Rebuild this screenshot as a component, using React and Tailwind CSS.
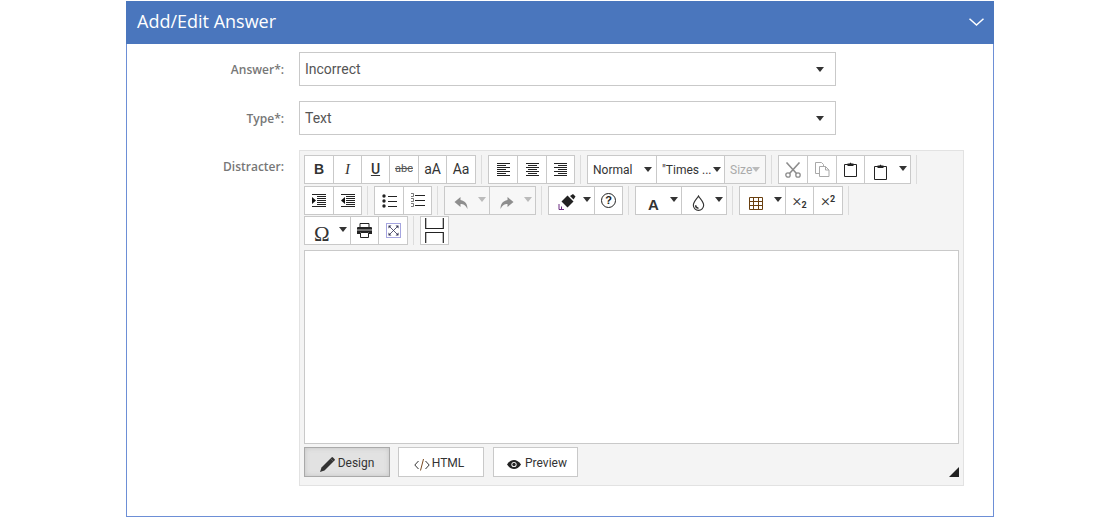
import React from "react";

const Caret = ({ c = "#333" }) => (
  <svg width="8" height="5" viewBox="0 0 8 5" className="shrink-0"><path d="M0 0h8L4 5z" fill={c} /></svg>
);

const Btn = ({ w, children, off }) => (
  <div className={`h-[29px] border border-[#c9c9c9] -ml-px first:ml-0 flex items-center justify-center shrink-0 ${w} ${off ? "bg-[#f7f7f7]" : "bg-white"}`}>
    {children}
  </div>
);

const Split = ({ w, children, off }) => (
  <Btn w={w} off={off}>
    <div className="flex items-center w-full pl-[9px] pr-[3px] justify-between">
      <div className="mt-[5px] flex">{children}</div>
      <div className="-mt-[3px] flex"><Caret c={off ? "#bbb" : "#333"} /></div>
    </div>
  </Btn>
);

const Sep = () => <div className="w-px h-[29px] bg-[#dcdcdc] ml-[5px] mr-[6px] shrink-0" />;
const Group = ({ children }) => <div className="flex shrink-0">{children}</div>;
const Row = ({ children, cls }) => <div className={`flex h-[29px] ${cls}`}>{children}</div>;

const Lines = ({ rows }) => (
  <svg width="15" height="15" viewBox="0 0 15 15">
    {rows.map(([a, b], i) => (
      <path key={i} d={`M${a} ${1.5 + i * 2}H${b}`} stroke="#222" strokeWidth="1" />
    ))}
  </svg>
);

const Indent = ({ out }) => (
  <svg width="16" height="15" viewBox="0 0 16 15">
    {[0, 2, 4, 6, 8, 10, 12].map((y) => (
      <path key={y} d={y === 0 || y === 12 ? `M1 ${y + 1.5}H15` : `M6 ${y + 1.5}H15`} stroke="#222" />
    ))}
    <path d={out ? "M5 4L1 7.500 5 11z" : "M1 4l4 3.500L1 11z"} fill="#111" />
  </svg>
);

const Bullets = () => (
  <svg width="15" height="14" viewBox="0 0 15 14">
    {[2, 7, 12].map((y) => (
      <g key={y}>
        <circle cx="2" cy={y} r="1.700" fill="#222" />
        <path d={`M6 ${y + 0.5}H15`} stroke="#222" />
      </g>
    ))}
  </svg>
);

const Numbers = () => (
  <svg width="15" height="15" viewBox="0 0 15 15">
    {[2, 7, 12].map((y) => (
      <g key={y}>
        <path d={`M5 ${y + 0.5}H15`} stroke="#222" />
        <path d={`M1 ${y - 1.5}h2.500v3H1`} stroke="#555" fill="none" strokeWidth=".8" />
      </g>
    ))}
  </svg>
);

const Undo = ({ flip }) => (
  <svg width="15" height="12" viewBox="0 0 14 12" style={flip ? { transform: "scaleX(-1)" } : undefined}>
    <path d="M6 0L0 5l6 5V7c3 0 5 1 7 5 0-5-2-8-7-9z" fill="#8e8e8e" />
  </svg>
);

const Brush = () => (
  <svg width="18" height="16" viewBox="0 0 18 16" className="-mt-[3px]">
    <path d="M12 2l3-2 2.500 2.500-2 3z" fill="#222" />
    <path d="M9.500 1.500L15.500 7.500 9.500 13.500 3.500 7.500z" fill="#222" />
    <path d="M1 10v5.500h5M3.500 12.500v2.500" stroke="#6a2a80" fill="none" />
  </svg>
);

const Help = () => (
  <div className="w-[15px] h-[15px] rounded-full border-[1.5px] border-[#222] flex items-center justify-center text-[11px] leading-none font-bold text-[#222] -mt-[1px] font-['Liberation_Sans',sans-serif]">?</div>
);

const Scissors = () => (
  <svg width="16" height="16" viewBox="0 0 16 16" fill="none" stroke="#8d8d8d" strokeWidth="1.3">
    <circle cx="3" cy="13" r="2.200" />
    <circle cx="13" cy="13" r="2.200" />
    <path d="M1.500 .5L11.500 11.500M14.500 .5L4.500 11.500" strokeWidth="1.600" />
  </svg>
);

const Copy = () => (
  <svg width="15" height="15" viewBox="0 0 15 15" fill="#fff" stroke="#a9a9a9" strokeWidth="1">
    <path d="M.5 .5h6l2 2v9h-8z" />
    <path d="M4.500 4.500h6l3.500 3.500v6.500h-9.500zM10.500 4.500v3.500h3.500" />
  </svg>
);

const Clip = ({ h = 15, c = "#222" }) => (
  <svg width="13" height={h} viewBox={`0 0 13 ${h}`} fill="none">
    <path d={`M.5 2.500h12v${h - 3}h-12z`} stroke={c} />
    <path d="M3.500 1.500h2l1-1 1 1h2v2.500h-6z" fill="#222" />
  </svg>
);

const TableIcon = () => (
  <svg width="14" height="13" viewBox="0 0 14 13" fill="none">
    <path d="M.5 .5h13v12h-13zM.5 4.500h13M.5 8.500h13M4.500 .5v12M9.500 .5v12" stroke="#6a4010" />
  </svg>
);

const Printer = () => (
  <svg width="15" height="15" viewBox="0 0 15 15">
    <path d="M3 .5h9v4H3z" fill="none" stroke="#222" />
    <path d="M1 4h13a1 1 0 011 1v6h-3V9H3v2H0V5a1 1 0 011-1z" fill="#222" />
    <path d="M3.500 9.500h8v5h-8z" fill="#fff" stroke="#222" />
    <path d="M0 7h15" stroke="#eee" strokeWidth=".8" />
  </svg>
);

const Full = () => (
  <svg width="15" height="15" viewBox="0 0 15 15" fill="none">
    <path d="M.5 .5h14v14H.5z" stroke="#4a4ac0" strokeDasharray="1 1" />
    <path d="M4 4l7 7M11 4l-7 7" stroke="#335" strokeWidth=".8" />
    <path d="M2.500 2.500h3l-3 3zM12.500 2.500h-3l3 3zM2.500 12.500h3l-3-3zM12.500 12.500h-3l3-3z" fill="#335" />
  </svg>
);

const Break = () => (
  <svg width="19" height="25" viewBox="0 0 19 25" fill="none" stroke="#222" strokeWidth="1.200">
    <path d="M.7 0v10.500h17.600V0" />
    <path d="M.7 25V14.500h17.600V25" />
  </svg>
);

const Drop = () => (
  <svg width="13" height="16" viewBox="0 0 11 14" fill="none" className="ml-[1px] -mt-[1px]">
    <path d="M5.500 .8C4 3.500 1 6 1 9a4.500 4.500 0 009 0C10 6 7 3.500 5.500 .8z" stroke="#333" />
    <path d="M3 9c0 1.500 1 2.500 2.500 2.500" stroke="#333" strokeWidth="1.300" />
  </svg>
);

const Pencil = () => (
  <svg width="15" height="15" viewBox="0 0 15 15">
    <path d="M10.500 1.500l3 3L4.500 13.500 0 15l1.500-4.500z" fill="#333" />
    <path d="M11.500 .5a1 1 0 011.500 0l1.500 1.500a1 1 0 010 1.500l-1 1-3-3z" fill="#333" />
  </svg>
);

const Code = () => (
  <svg width="16" height="13" viewBox="0 0 16 13" fill="none" stroke="#333" strokeWidth="1">
    <path d="M4.500 3L.8 7l3.700 4M11.500 3l3.700 4-3.700 4" />
    <path d="M9.500 1L6.500 12.500" stroke="#7a4a20" />
  </svg>
);

const Eye = () => (
  <svg width="14" height="9" viewBox="0 0 14 9">
    <path d="M0 4.500C2 1.500 4.500 0 7 0s5 1.500 7 4.500C12 7.500 9.500 9 7 9S2 7.500 0 4.500z" fill="#222" />
    <circle cx="7" cy="4.500" r="2.600" fill="#fff" />
    <circle cx="7" cy="4.500" r="1.700" fill="#222" />
  </svg>
);

const Select = ({ value }) => (
  <div className="w-[537px] h-[34px] border border-[#c9c9c9] bg-white flex items-center justify-between pl-[5px] pr-[11px] text-[14px] text-[#555] font-['Roboto',sans-serif]">
    <span>{value}</span>
    <Caret />
  </div>
);

const Label = ({ children, cls }) => (
  <div className={`w-[157px] text-right text-[12px] font-semibold text-[#777] font-['Open_Sans',sans-serif] ${cls}`}>{children}</div>
);

const Tab = ({ active, w, cls, children }) => (
  <div className={`h-[30px] pt-px flex items-center justify-center text-[12px] text-[#333] border ${w} ${cls} ${active ? "bg-[#e2e2e2] border-[#a9a9a9] shadow-[inset_0_0_5px_#c4c4c4]" : "bg-white border-[#c9c9c9]"}`}>
    {children}
  </div>
);

export default function App() {
  const ui = "font-['Roboto',sans-serif] text-[#333]";
  return (
    <div className="pt-px bg-white h-[519px] overflow-hidden">
      <div className="w-[868px] h-[516px] mx-auto border border-t-0 border-[#6d8fd6] bg-white">
        <div className="-mx-px h-[43px] bg-[#4a76bd] flex items-center justify-between pl-[11px] pr-[10px] pb-[2px] text-white">
          <span className="text-[18px] font-medium font-['Open_Sans',sans-serif]">Add/Edit Answer</span>
          <svg width="15" height="8" viewBox="0 0 15 8" fill="none" stroke="#fff" strokeWidth="1.500">
            <path d="M.5 .7L7.500 7l7-6.300" />
          </svg>
        </div>

        <div className="pt-[8px] flex flex-col gap-[15px]">
          <div className="flex items-center gap-[15px]"><Label cls="pt-px">Answer*:</Label><Select value="Incorrect" /></div>
          <div className="flex items-center gap-[15px]"><Label cls="pt-px">Type*:</Label><Select value="Text" /></div>
          <div className="flex items-start gap-[15px]">
            <Label cls="mt-[8px]">Distracter:</Label>
            <div className={`w-[665px] h-[336px] border border-[#e2e2e2] bg-[#f4f4f4] pl-[4px] pr-[4px] pt-[4px] flex flex-col ${ui}`}>
              <Row>
                <Group>
                  <Btn w="w-[30px]"><b className="text-[14px] font-['Liberation_Sans',sans-serif]">B</b></Btn>
                  <Btn w="w-[29px]"><i className="text-[15px] font-['Liberation_Serif',serif]">I</i></Btn>
                  <Btn w="w-[29px]"><u className="text-[14px] font-medium">U</u></Btn>
                  <Btn w="w-[30px]"><s className="text-[11px] text-[#555]">abc</s></Btn>
                  <Btn w="w-[29px]"><span className="text-[14px]">aA</span></Btn>
                  <Btn w="w-[30px]"><span className="text-[14px]">Aa</span></Btn>
                </Group>
                <Sep />
                <Group>
                  <Btn w="w-[30px]"><Lines rows={[[1,14],[1,10],[1,14],[1,10],[1,14],[1,10],[1,14]]} /></Btn>
                  <Btn w="w-[30px]"><Lines rows={[[1,14],[3,12],[1,14],[3,12],[1,14],[3,12],[1,14]]} /></Btn>
                  <Btn w="w-[29px]"><Lines rows={[[1,14],[5,14],[1,14],[5,14],[1,14],[5,14],[1,14]]} /></Btn>
                </Group>
                <Sep />
                <Group>
                  <Btn w="w-[70px]"><div className="w-full flex items-center justify-between pl-[5px] pr-[4px] text-[12px]"><span>Normal</span><Caret /></div></Btn>
                  <Btn w="w-[69px]"><div className="w-full flex items-center justify-between pl-[5px] pr-[3px] text-[12px]"><span>"Times ...</span><Caret /></div></Btn>
                  <Btn w="w-[42px]" off><div className="w-full flex items-center pl-[5px] text-[12px] text-[#aaa]"><span>Size</span><Caret c="#bbb" /></div></Btn>
                </Group>
                <Sep />
                <Group>
                  <Btn w="w-[30px]"><Scissors /></Btn>
                  <Btn w="w-[30px]"><Copy /></Btn>
                  <Btn w="w-[29px]"><Clip /></Btn>
                  <Split w="w-[47px]"><Clip h={16} /></Split>
                </Group>
                <Sep />
              </Row>

              <Row cls="mt-[2px]">
                <Group>
                  <Btn w="w-[30px]"><Indent /></Btn>
                  <Btn w="w-[29px]"><Indent out /></Btn>
                </Group>
                <Sep />
                <Group>
                  <Btn w="w-[30px]"><Bullets /></Btn>
                  <Btn w="w-[29px]"><Numbers /></Btn>
                </Group>
                <Sep />
                <Group>
                  <Split w="w-[46px]" off><Undo /></Split>
                  <Split w="w-[47px]" off><Undo flip /></Split>
                </Group>
                <Sep />
                <Group>
                  <Split w="w-[47px]"><Brush /></Split>
                  <Btn w="w-[29px]"><Help /></Btn>
                </Group>
                <Sep />
                <Group>
                  <Split w="w-[47px]"><b className="text-[15px] leading-none ml-[3px] mt-[2px] font-['Liberation_Sans',sans-serif]">A</b></Split>
                  <Split w="w-[46px]"><Drop /></Split>
                </Group>
                <Sep />
                <Group>
                  <Split w="w-[47px]"><TableIcon /></Split>
                  <Btn w="w-[29px]"><span className="text-[17px] font-light leading-none font-['Roboto',sans-serif]">×<sub className="text-[9px] font-bold">2</sub></span></Btn>
                  <Btn w="w-[30px]"><span className="text-[17px] font-light leading-none font-['Roboto',sans-serif]">×<sup className="text-[9px] font-bold">2</sup></span></Btn>
                </Group>
                <Sep />
              </Row>

              <Row cls="mt-[1px]">
                <Group>
                  <Split w="w-[47px]"><span className="text-[21px] leading-none mt-[2px] font-['Liberation_Serif',serif]">Ω</span></Split>
                  <Btn w="w-[29px]"><Printer /></Btn>
                  <Btn w="w-[30px]"><Full /></Btn>
                </Group>
                <Sep />
                <Group><Btn w="w-[29px]"><Break /></Btn></Group>
              </Row>

              <div className="mt-[5px] h-[194px] border border-[#c9c9c9] bg-white" />

              <div className="mt-[3px] flex items-end">
                <div className="flex">
                  <Tab active w="w-[86px]" cls="gap-[3px]"><span className="mt-[3px] flex"><Pencil /></span><span>Design</span></Tab>
                  <div className="w-[8px]" />
                  <Tab w="w-[86px]" cls="gap-[2px] pr-[4px]"><span className="mt-[3px] flex"><Code /></span><span>HTML</span></Tab>
                  <div className="w-[9px]" />
                  <Tab w="w-[85px]" cls="gap-[4px] pl-[3px]"><span className="mt-[3px] flex"><Eye /></span><span>Preview</span></Tab>
                </div>
                <svg className="ml-auto" width="10" height="10" viewBox="0 0 10 10"><path d="M10 0v10H0z" fill="#222" /></svg>
              </div>
            </div>
          </div>
        </div>
      </div>
    </div>
  );
}
